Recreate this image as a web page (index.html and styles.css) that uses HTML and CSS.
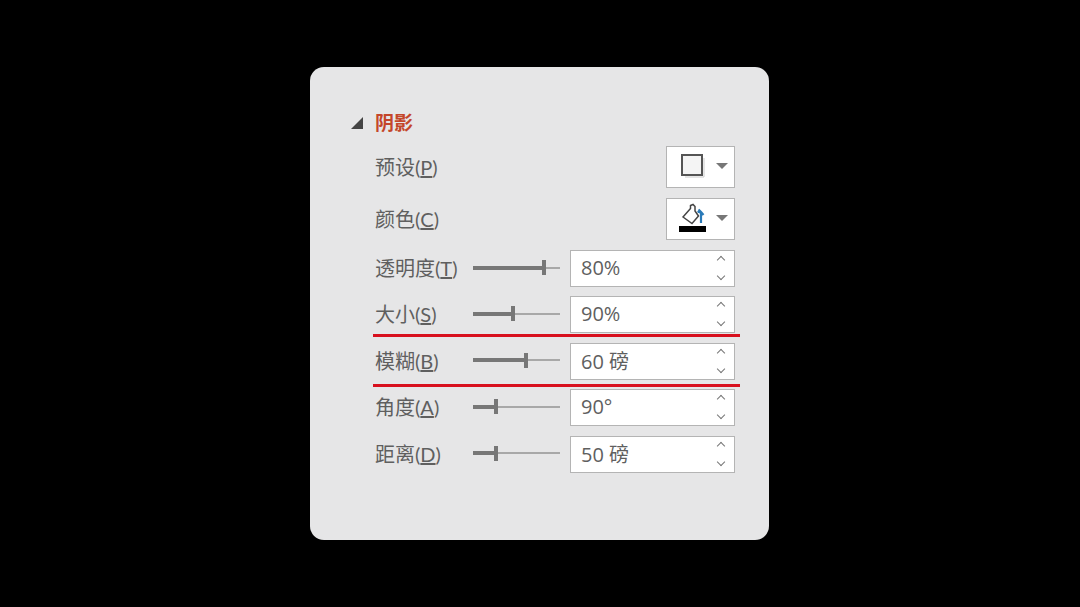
FILE: index.html
```html
<!DOCTYPE html>
<html>
  <head>
    <title>阴影</title>
    <link rel="stylesheet" href="styles.css">
  </head>
  <body>
    <div class="panel">
      <div class="head">
        <svg class="head-arrow" width="12" height="12" viewBox="0 0 12 12"><path d="M12 0V12H0Z" fill="#444"/></svg>
        <span class="head-title">阴影</span>
      </div>

      <div class="row pick-row">
        <span class="label">预设(<u>P</u>)</span>
        <div class="pick">
          <svg class="pick-icon" width="30" height="26" viewBox="0 0 30 26"><rect x="5" y="2" width="20" height="20" fill="#f4f4f4" stroke="#555" stroke-width="2"/><path d="M27 5V24H8" fill="none" stroke="#ccc"/></svg>
          <span class="caret"></span>
        </div>
      </div>
      <div class="row pick-row">
        <span class="label">颜色(<u>C</u>)</span>
        <div class="pick">
          <svg class="pick-icon" width="30" height="30" viewBox="0 0 30 30"><path d="M6 14L13.500 5.500V2.500L16 1.500L18 3.500V8L21.500 13L15 20.500Z" fill="#fff" stroke="#444" stroke-width="1.500"/><path d="M24 20V11C24 9.500 22.500 8.500 20.500 9M21.500 6.500L24 9L26.500 12" fill="none" stroke="#2a7ab8" stroke-width="2.200"/><rect x="2" y="23" width="27" height="6" fill="#000"/></svg>
          <span class="caret"></span>
        </div>
      </div>

      <div class="row spin-row">
        <span class="label">透明度(<u>T</u>)</span>
        <div class="slider"><div class="fill" style="width: 70px"></div><div class="thumb"></div></div>
        <div class="spin"><span>80%</span><div class="arrows"><i class="up"></i><i class="down"></i></div></div>
      </div>
      <div class="row spin-row">
        <span class="label">大小(<u>S</u>)</span>
        <div class="slider"><div class="fill" style="width: 39px"></div><div class="thumb"></div></div>
        <div class="spin"><span>90%</span><div class="arrows"><i class="up"></i><i class="down"></i></div></div>
      </div>
      <div class="row spin-row">
        <span class="label">模糊(<u>B</u>)</span>
        <div class="slider"><div class="fill" style="width: 52px"></div><div class="thumb"></div></div>
        <div class="spin"><span>60 磅</span><div class="arrows"><i class="up"></i><i class="down"></i></div></div>
      </div>
      <div class="row spin-row">
        <span class="label">角度(<u>A</u>)</span>
        <div class="slider"><div class="fill" style="width: 22px"></div><div class="thumb"></div></div>
        <div class="spin"><span>90°</span><div class="arrows"><i class="up"></i><i class="down"></i></div></div>
      </div>
      <div class="row spin-row">
        <span class="label">距离(<u>D</u>)</span>
        <div class="slider"><div class="fill" style="width: 22px"></div><div class="thumb"></div></div>
        <div class="spin"><span>50 磅</span><div class="arrows"><i class="up"></i><i class="down"></i></div></div>
      </div>

      <div class="redline line-one"></div>
      <div class="redline line-two"></div>
    </div>
  </body>
</html>
```

FILE: styles.css
```css
html, body {
  height: 100%;
}

body {
  margin: 0;
  background-color: #000;
  font-family: "Open Sans", "Noto Sans CJK SC", sans-serif;
  color: #5f5f5f;
  overflow: hidden;
}

.panel {
  position: relative;
  box-sizing: border-box;
  width: 459px;
  height: 473px;
  margin: 67px 0 0 310px;
  padding: 42px 34px 0 65px;
  background-color: #e6e6e7;
  border-radius: 14px;
}

.head {
  position: relative;
  height: 28px;
  display: flex;
  align-items: center;
}

.head-arrow {
  position: absolute;
  left: -24px;
  top: 8px;
}

.head-title {
  font-family: "Noto Sans CJK SC", sans-serif;
  font-size: 19px;
  font-weight: 700;
  color: #c4462a;
  line-height: 28px;
  margin-bottom: 2px;
}

.row {
  display: flex;
  align-items: center;
}

.pick-row {
  justify-content: space-between;
  height: 42px;
  margin-bottom: 10px;
}

.head + .pick-row {
  margin-top: 9px;
}

.spin-row {
  height: 37px;
  margin-bottom: 9.400px;
}

.label {
  font-family: Lato, "Noto Sans CJK SC", sans-serif;
  font-size: 20px;
  white-space: nowrap;
  margin-bottom: 2px;
}

.spin-row .label {
  width: 98px;
  flex: none;
}

.pick {
  box-sizing: border-box;
  width: 69px;
  height: 42px;
  display: flex;
  align-items: center;
  padding-left: 10px;
  background-color: #fff;
  border: 1px solid #b4b4b4;
}

.pick-icon {
  flex: none;
  margin-bottom: 2px;
}

.caret {
  width: 0;
  height: 0;
  margin-left: 9px;
  margin-bottom: 2px;
  border-left: 6px solid transparent;
  border-right: 6px solid transparent;
  border-top: 6px solid #777;
}

.slider {
  position: relative;
  width: 87px;
  height: 14px;
  flex: none;
  margin-right: 10px;
  margin-bottom: 2px;
  display: flex;
  align-items: center;
}

.slider::before {
  content: "";
  position: absolute;
  left: 0;
  right: 0;
  top: 6px;
  height: 2px;
  background-color: #a8a8a8;
}

.fill {
  position: relative;
  height: 4px;
  background-color: #777;
}

.thumb {
  position: relative;
  width: 4px;
  height: 15px;
  margin-left: -1px;
  background-color: #777;
}

.spin {
  box-sizing: border-box;
  width: 165px;
  height: 37px;
  display: flex;
  align-items: center;
  justify-content: space-between;
  padding: 0 10px 0 10px;
  background-color: #fff;
  border: 1px solid #b4b4b4;
  font-size: 20px;
}

.spin span {
  margin-bottom: 2px;
}

.arrows {
  display: flex;
  flex-direction: column;
  gap: 13px;
}

.arrows i {
  display: block;
  width: 5px;
  height: 5px;
  border-left: 1.500px solid #777;
  border-top: 1.500px solid #777;
}

.arrows .up {
  transform: translateY(1px) rotate(45deg);
}

.arrows .down {
  transform: translateY(-2px) rotate(225deg);
}

.redline {
  position: absolute;
  left: 63px;
  width: 367px;
  height: 3px;
  background-color: #d8101e;
}

.line-one {
  top: 267px;
}

.line-two {
  top: 316.500px;
}
```
